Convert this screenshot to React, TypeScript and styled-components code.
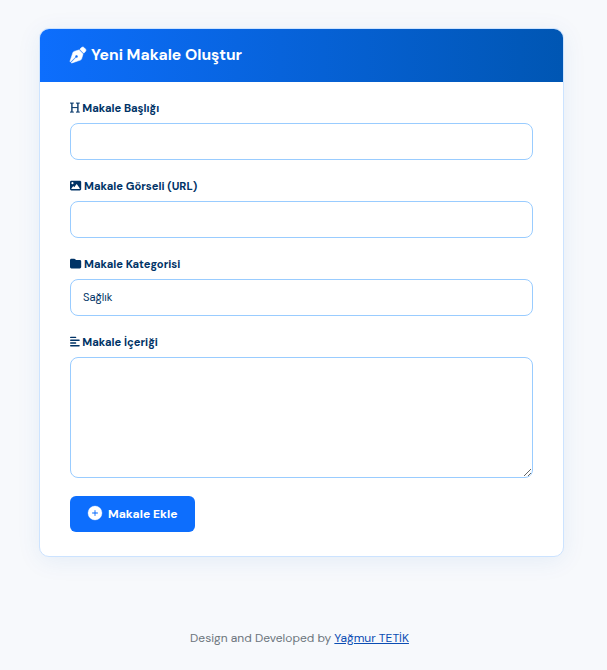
import React from "react";
import styled, { createGlobalStyle } from "styled-components";
import { FaPenNib, FaImage, FaFolder, FaAlignLeft, FaCirclePlus } from "react-icons/fa6";

const GlobalStyle = createGlobalStyle`
  * { box-sizing: border-box; }
  body {
    margin: 0;
    background: #f7f9fc;
    font-family: "DM Sans", Inter, sans-serif;
  }
`;

const Page = styled.div`
  display: flex;
  flex-direction: column;
  min-height: 670px;
  padding: 28px 43px 0 39px;
`;

const Card = styled.main`
  width: 525px;
  height: 529px;
  border: 1px solid #cce3ff;
  border-radius: 10px;
  background: #fff;
  box-shadow: 0 4px 24px rgba(0, 86, 179, 0.08);
  overflow: hidden;
`;

const Header = styled.header`
  display: flex;
  align-items: center;
  gap: 5px;
  height: 53px;
  padding: 0 30px;
  color: #fff;
  background: linear-gradient(90deg, #0d6efd, #0056b3);

  svg {
    margin-top: -1px;
    stroke: #fff;
    stroke-width: 18px;
    overflow: visible;
  }
`;

const Title = styled.h1`
  margin: -1px 0 0;
  font-size: 15.68px;
  line-height: 20px;
  font-weight: 700;
  white-space: nowrap;
`;

const Form = styled.form`
  display: flex;
  flex-direction: column;
  align-items: stretch;
  padding: 17px 30px 0;
`;

const Field = styled.div`
  display: flex;
  flex-direction: column;
  margin-bottom: 17px;
`;

const Label = styled.label<{ $narrow?: boolean }>`
  display: flex;
  align-items: center;
  gap: ${({ $narrow }) => ($narrow ? 2.5 : 2.9)}px;
  height: 18px;
  margin-bottom: 6px;
  color: #003366;
  font-size: 11.2px;
  font-weight: 700;
  white-space: nowrap;

  svg {
    flex: none;
    width: ${({ $narrow }) => ($narrow ? 9.8 : 11.2)}px;
    height: 11.2px;
    overflow: visible;
  }
`;

const controlBase = `
  display: block;
  width: 100%;
  border: 1px solid #99ccff;
  border-radius: 8px;
  outline: none;
  background: #fff;
  color: #003366;
  font-family: "DM Sans", Inter, sans-serif;
  font-size: 11.2px;
  padding: 0 12px;
`;

const Input = styled.input`
  ${controlBase}
  height: 37px;
`;

const Select = styled.select`
  ${controlBase}
  height: 37px;
  padding-bottom: 1px;
  appearance: none;
`;

const TextArea = styled.textarea`
  ${controlBase}
  height: 121px;
  resize: vertical;
`;

const SubmitButton = styled.button`
  display: flex;
  align-items: center;
  gap: 6px;
  width: 125px;
  height: 36px;
  margin-top: 1px;
  padding: 0 0 0 18px;
  border: 0;
  border-radius: 6px;
  background: #0d6efd;
  color: #fff;
  font-family: "DM Sans", Inter, sans-serif;
  font-size: 12.1px;
  font-weight: 700;
  white-space: nowrap;

  svg {
    margin-top: -2px;
    stroke: #fff;
    stroke-width: 12px;
    overflow: visible;
  }
`;

const Footer = styled.footer`
  margin-top: 72px;
  padding-right: 4px;
  text-align: center;
  color: #6c757d;
  font-size: 12px;
  line-height: 18px;

  a {
    color: #0b4db3;
    text-decoration: underline;
  }
`;

function HeadingIcon() {
  return (
    <svg viewBox="0 0 9.8 11.2" fill="none" stroke="currentColor">
      <path d="M1.9 1.1V10.1M7.9 1.1V10.1" strokeWidth="1.35" />
      <path d="M0 1.1H3.8M6 1.1H9.8M0 10.1H3.8M6 10.1H9.8M1.9 5.6H7.9" strokeWidth="1" />
    </svg>
  );
}

export default function App() {
  return (
    <>
      <GlobalStyle />
      <Page>
        <Card>
          <Header>
            <FaPenNib size={16} />
            <Title>Yeni Makale Oluştur</Title>
          </Header>
          <Form>
            <Field>
              <Label htmlFor="title" $narrow>
                <HeadingIcon />
                Makale Başlığı
              </Label>
              <Input id="title" />
            </Field>
            <Field>
              <Label htmlFor="image">
                <FaImage />
                Makale Görseli (URL)
              </Label>
              <Input id="image" />
            </Field>
            <Field>
              <Label htmlFor="category">
                <FaFolder />
                Makale Kategorisi
              </Label>
              <Select id="category">
                <option>Sağlık</option>
              </Select>
            </Field>
            <Field>
              <Label htmlFor="content" $narrow>
                <FaAlignLeft />
                Makale İçeriği
              </Label>
              <TextArea id="content" />
            </Field>
            <SubmitButton type="button">
              <FaCirclePlus size={14} />
              Makale Ekle
            </SubmitButton>
          </Form>
        </Card>
        <Footer>
          Design and Developed by <a href="#">Yağmur TETİK</a>
        </Footer>
      </Page>
    </>
  );
}
